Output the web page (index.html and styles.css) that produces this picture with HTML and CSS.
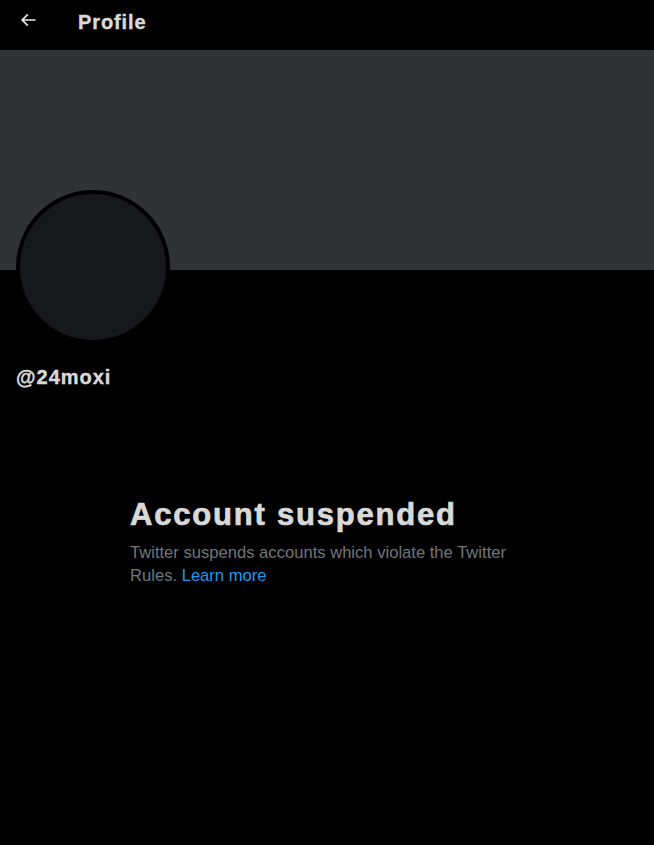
FILE: index.html
```html
<!DOCTYPE html>
<html>
<head>
<meta charset="utf-8">
<link rel="stylesheet" href="styles.css">
</head>
<body>
<header class="topbar">
  <button class="back" aria-label="Back">
    <svg viewBox="0 0 24 24" width="20" height="20"><path fill="currentColor" d="M7.414 13l5.043 5.04-1.414 1.42L3.586 12l7.457-7.46 1.414 1.42L7.414 11H21v2H7.414z"/></svg>
  </button>
  <h1 class="title">Profile</h1>
</header>
<div class="banner"></div>
<div class="profile">
  <div class="avatar"></div>
  <div class="handle">@24moxi</div>
</div>
<section class="notice">
  <h2 class="notice-title">Account suspended</h2>
  <p class="notice-text">Twitter suspends accounts which violate the Twitter Rules. <a href="#" class="link">Learn more</a></p>
</section>
</body>
</html>
```
FILE: styles.css
```css
* { box-sizing: border-box; }
html, body { margin: 0; padding: 0; background: #000; }
body {
  font-family: "Liberation Sans", Arial, sans-serif;
  color: #e7e9ea;
  width: 654px;
  height: 845px;
  overflow: hidden;
}
.topbar {
  height: 50px;
  display: flex;
  align-items: flex-start;
  padding-top: 10px;
}
.back {
  background: none;
  border: none;
  color: #e7e9ea;
  padding: 0;
  margin-left: 18px;
  width: 20px;
  height: 20px;
  display: flex;
  cursor: pointer;
}
.title {
  margin: 0 0 0 40px;
  font-size: 20px;
  font-weight: 700;
  line-height: 24px;
  letter-spacing: 0.045em;
  -webkit-text-stroke: 0.4px #d9d9d9;
  color: #d9d9d9;
}
.banner {
  height: 220px;
  background: #2f3336;
}
.profile {
  padding-left: 16px;
}
.avatar {
  width: 154px;
  height: 154px;
  margin-top: -80px;
  border-radius: 50%;
  border: 4px solid #000;
  background: #16181c;
}
.handle {
  margin-top: 21px;
  font-size: 20px;
  font-weight: 700;
  line-height: 24px;
  letter-spacing: 0.05em;
  -webkit-text-stroke: 0.4px #d9d9d9;
  color: #d9d9d9;
}
.notice {
  width: 394px;
  margin: 108px auto 0;
}
.notice-title {
  margin: 0;
  font-size: 31px;
  font-weight: 700;
  line-height: 36px;
  letter-spacing: 0.058em;
  -webkit-text-stroke: 0.7px #d9d9d9;
  color: #d9d9d9;
}
.notice-text {
  margin: 8px 0 0;
  font-size: 16.6px;
  line-height: 23px;
  color: #71767b;
}
.link {
  color: #1d9bf0;
  text-decoration: none;
}
```
